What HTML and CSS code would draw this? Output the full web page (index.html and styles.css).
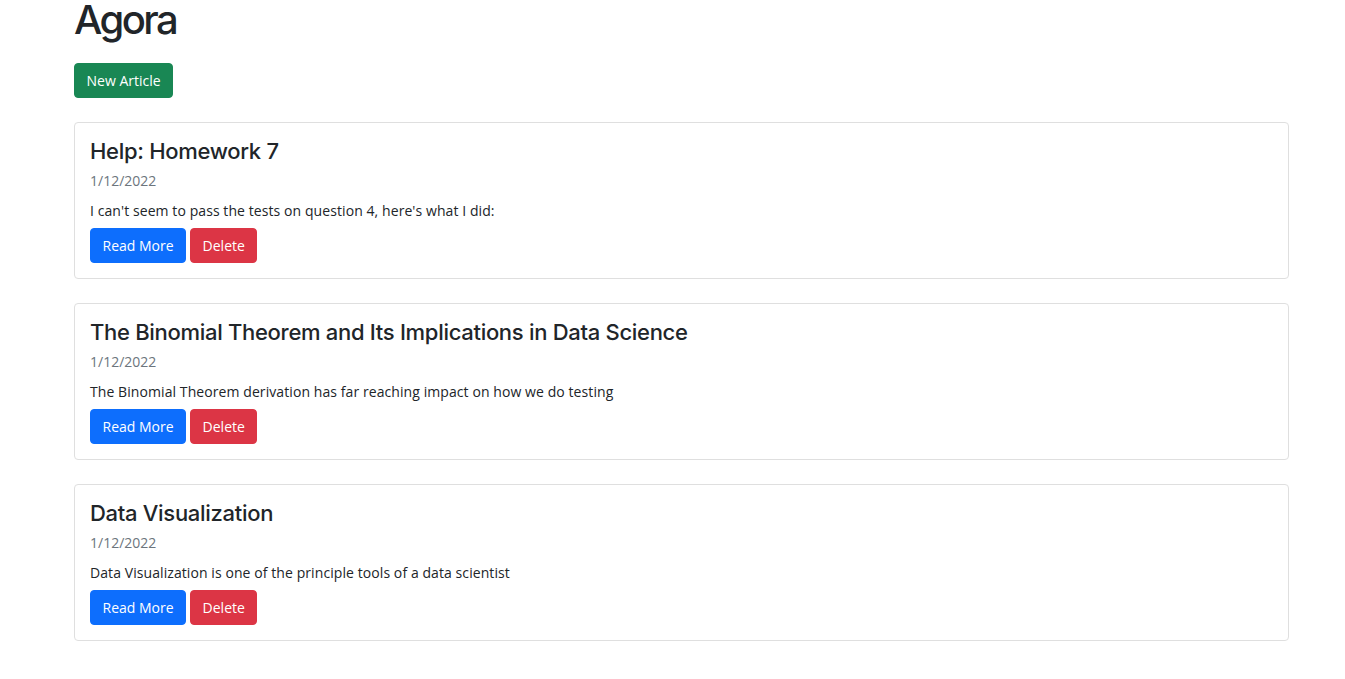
FILE: index.html
```html
<!DOCTYPE html>
<html lang="en">
<head>
<meta charset="utf-8">
<title>Agora</title>
<link rel="stylesheet" href="styles.css">
</head>
<body>
<div class="container">
  <h1 class="brand">Agora</h1>
  <a class="btn btn-green new-btn" href="#">New Article</a>
  <div class="card">
    <h5 class="card-title">Help: Homework 7</h5>
    <div class="card-date">1/12/2022</div>
    <p class="card-text">I can't seem to pass the tests on question 4, here's what I did:</p>
    <div class="actions">
      <a class="btn btn-blue" href="#">Read More</a>
      <button class="btn btn-red" type="button">Delete</button>
    </div>
  </div>
  <div class="card">
    <h5 class="card-title">The Binomial Theorem and Its Implications in Data Science</h5>
    <div class="card-date">1/12/2022</div>
    <p class="card-text">The Binomial Theorem derivation has far reaching impact on how we do testing</p>
    <div class="actions">
      <a class="btn btn-blue" href="#">Read More</a>
      <button class="btn btn-red" type="button">Delete</button>
    </div>
  </div>
  <div class="card">
    <h5 class="card-title">Data Visualization</h5>
    <div class="card-date">1/12/2022</div>
    <p class="card-text">Data Visualization is one of the principle tools of a data scientist</p>
    <div class="actions">
      <a class="btn btn-blue" href="#">Read More</a>
      <button class="btn btn-red" type="button">Delete</button>
    </div>
  </div>
</div>
</body>
</html>
```
FILE: styles.css
```css
* { box-sizing: border-box; }
html, body { margin: 0; padding: 0; background: #fff; }
body {
  font-family: "Open Sans", "Noto Sans", "Liberation Sans", sans-serif;
  color: #212529;
  font-size: 14px;
}
.container {
  width: 1215px;
  margin-left: 74px;
  display: flex;
  flex-direction: column;
  align-items: flex-start;
}
.brand {
  margin: 0;
  font-family: "Inter", sans-serif;
  font-size: 40px;
  font-weight: 500;
  line-height: 40px;
  letter-spacing: -2.6px;
}
.btn {
  display: inline-flex;
  align-items: center;
  justify-content: center;
  height: 35px;
  padding: 0 11.5px;
  border: 1px solid transparent;
  border-radius: 4px;
  color: #fff;
  font-family: inherit;
  font-size: 14px;
  text-decoration: none;
  cursor: pointer;
}
.new-btn { margin-top: 23px; }
.btn-green { background: #198754; border-color: #198754; }
.btn-blue { background: #0d6efd; border-color: #0d6efd; }
.btn-red { background: #dc3545; border-color: #dc3545; }
.card {
  width: 100%;
  margin-top: 24px;
  padding: 15px;
  border: 1px solid #dfdfdf;
  border-radius: 4px;
}
.card-title {
  margin: 0 0 6px;
  font-family: "Inter", sans-serif;
  font-size: 22px;
  font-weight: 500;
  line-height: 26px;
  letter-spacing: -0.3px;
}
.card-date {
  color: #6c757d;
  line-height: 21px;
  margin-bottom: 9px;
}
.card-text {
  margin: 0 0 7px;
  line-height: 21px;
  letter-spacing: 0.08px;
}
.actions {
  display: flex;
  gap: 4px;
}
```
